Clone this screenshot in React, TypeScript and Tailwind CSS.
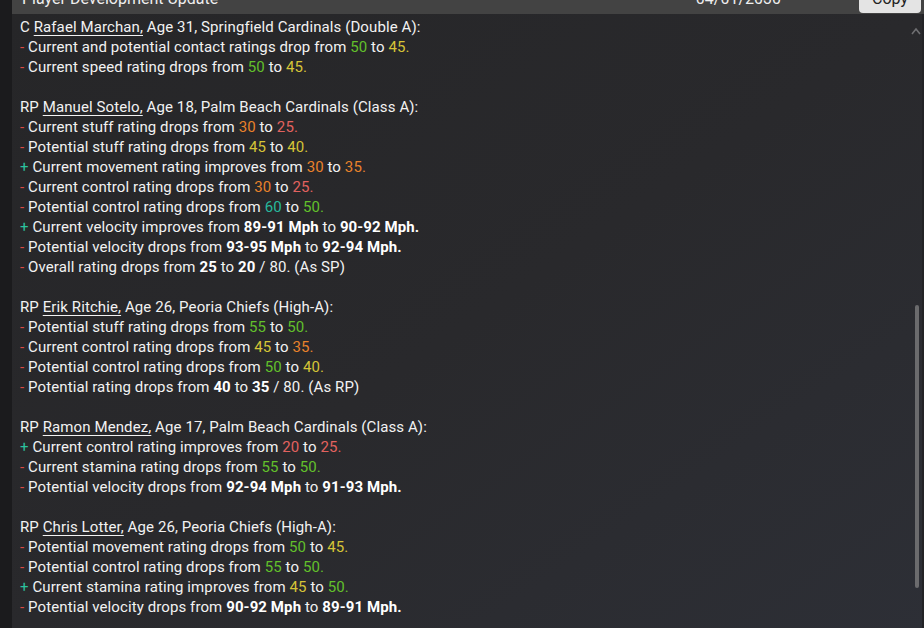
import React from 'react';

type Seg = { t: string; c?: string; b?: boolean };
type Line = { sign: '+' | '-'; segs: Seg[] };
type Entry = { pos: string; name: string; rest: string; lines: Line[] };

const G = 'text-[#62c02b]';
const Y = 'text-[#d6c437]';
const O = 'text-[#e9822b]';
const R = 'text-[#e2625f]';
const T = 'text-[#27b99c]';

const entries: Entry[] = [
  {
    pos: 'C',
    name: 'Rafael Marchan,',
    rest: ' Age 31, Springfield Cardinals (Double A):',
    lines: [
      { sign: '-', segs: [{ t: 'Current and potential contact ratings drop from ' }, { t: '50', c: G }, { t: ' to ' }, { t: '45.', c: Y }] },
      { sign: '-', segs: [{ t: 'Current speed rating drops from ' }, { t: '50', c: G }, { t: ' to ' }, { t: '45.', c: Y }] },
    ],
  },
  {
    pos: 'RP',
    name: 'Manuel Sotelo,',
    rest: ' Age 18, Palm Beach Cardinals (Class A):',
    lines: [
      { sign: '-', segs: [{ t: 'Current stuff rating drops from ' }, { t: '30', c: O }, { t: ' to ' }, { t: '25.', c: R }] },
      { sign: '-', segs: [{ t: 'Potential stuff rating drops from ' }, { t: '45', c: Y }, { t: ' to ' }, { t: '40.', c: Y }] },
      { sign: '+', segs: [{ t: 'Current movement rating improves from ' }, { t: '30', c: O }, { t: ' to ' }, { t: '35.', c: O }] },
      { sign: '-', segs: [{ t: 'Current control rating drops from ' }, { t: '30', c: O }, { t: ' to ' }, { t: '25.', c: R }] },
      { sign: '-', segs: [{ t: 'Potential control rating drops from ' }, { t: '60', c: T }, { t: ' to ' }, { t: '50.', c: G }] },
      { sign: '+', segs: [{ t: 'Current velocity improves from ' }, { t: '89-91 Mph', b: true }, { t: ' to ' }, { t: '90-92 Mph.', b: true }] },
      { sign: '-', segs: [{ t: 'Potential velocity drops from ' }, { t: '93-95 Mph', b: true }, { t: ' to ' }, { t: '92-94 Mph.', b: true }] },
      { sign: '-', segs: [{ t: 'Overall rating drops from ' }, { t: '25', b: true }, { t: ' to ' }, { t: '20', b: true }, { t: ' / 80. (As SP)' }] },
    ],
  },
  {
    pos: 'RP',
    name: 'Erik Ritchie,',
    rest: ' Age 26, Peoria Chiefs (High-A):',
    lines: [
      { sign: '-', segs: [{ t: 'Potential stuff rating drops from ' }, { t: '55', c: G }, { t: ' to ' }, { t: '50.', c: G }] },
      { sign: '-', segs: [{ t: 'Current control rating drops from ' }, { t: '45', c: Y }, { t: ' to ' }, { t: '35.', c: O }] },
      { sign: '-', segs: [{ t: 'Potential control rating drops from ' }, { t: '50', c: G }, { t: ' to ' }, { t: '40.', c: Y }] },
      { sign: '-', segs: [{ t: 'Potential rating drops from ' }, { t: '40', b: true }, { t: ' to ' }, { t: '35', b: true }, { t: ' / 80. (As RP)' }] },
    ],
  },
  {
    pos: 'RP',
    name: 'Ramon Mendez,',
    rest: ' Age 17, Palm Beach Cardinals (Class A):',
    lines: [
      { sign: '+', segs: [{ t: 'Current control rating improves from ' }, { t: '20', c: R }, { t: ' to ' }, { t: '25.', c: R }] },
      { sign: '-', segs: [{ t: 'Current stamina rating drops from ' }, { t: '55', c: G }, { t: ' to ' }, { t: '50.', c: G }] },
      { sign: '-', segs: [{ t: 'Potential velocity drops from ' }, { t: '92-94 Mph', b: true }, { t: ' to ' }, { t: '91-93 Mph.', b: true }] },
    ],
  },
  {
    pos: 'RP',
    name: 'Chris Lotter,',
    rest: ' Age 26, Peoria Chiefs (High-A):',
    lines: [
      { sign: '-', segs: [{ t: 'Potential movement rating drops from ' }, { t: '50', c: G }, { t: ' to ' }, { t: '45.', c: Y }] },
      { sign: '-', segs: [{ t: 'Potential control rating drops from ' }, { t: '55', c: G }, { t: ' to ' }, { t: '50.', c: G }] },
      { sign: '+', segs: [{ t: 'Current stamina rating improves from ' }, { t: '45', c: Y }, { t: ' to ' }, { t: '50.', c: G }] },
      { sign: '-', segs: [{ t: 'Potential velocity drops from ' }, { t: '90-92 Mph', b: true }, { t: ' to ' }, { t: '89-91 Mph.', b: true }] },
    ],
  },
];

export default function App() {
  return (
    <div className="flex h-[628px] w-[924px] overflow-hidden bg-[#1d1d1f] font-['Roboto',sans-serif]">
      <div className="w-[12px] shrink-0 bg-[#1b1b1d]" />
      <div className="flex flex-1 flex-col">
        {/* title bar, mostly scrolled off the top */}
        <div className="h-[14px] shrink-0 overflow-hidden bg-[#434343]">
          <div className="-mt-[16px] flex h-[30px] items-center pl-[10px] pr-[3px] text-[16px] text-[#efefef]">
            <span>Player Development Update</span>
            <span className="ml-auto mr-[78px]">04/01/2030</span>
            <button className="h-[27px] rounded-[4px] bg-[#e4e4e4] px-[13px] text-[16px] text-[#222]">Copy</button>
          </div>
        </div>

        <div className="flex flex-1 bg-gradient-to-br from-[#262628] via-[#29292c] to-[#2d2f36]">
          <div className="flex-1 pl-[8px] pt-[3px] text-[15px] leading-[20px] tracking-[0.1px] text-[#f2f2f2]">
            {entries.map((e, i) => (
              <div key={i} className="mb-[20px]">
                <div>
                  {e.pos} <span className="underline underline-offset-[3px]">{e.name}</span>
                  {e.rest}
                </div>
                {e.lines.map((l, j) => (
                  <div key={j}>
                    {l.sign === '-' ? (
                      <span className="text-[#d94a44]">- </span>
                    ) : (
                      <span className="text-[#2bc39d]">+ </span>
                    )}
                    {l.segs.map((s, k) => (
                      <span key={k} className={(s.c ?? '') + (s.b ? ' font-bold text-white' : '')}>
                        {s.t}
                      </span>
                    ))}
                  </div>
                ))}
              </div>
            ))}
          </div>

          {/* scrollbar */}
          <div className="flex w-[12px] shrink-0 flex-col items-end">
            <svg width="12" height="10" viewBox="0 0 12 10" className="mt-[12px]">
              <path d="M2 8 L6 3 L10 8" stroke="#6f6f72" strokeWidth="1.6" fill="none" />
            </svg>
            <div className="mr-[3px] mt-[269px] h-[283px] w-[4px] rounded-full bg-[#6b6b6d]" />
          </div>
          <div className="w-[2px] shrink-0 bg-[#232326]" />
        </div>
      </div>
    </div>
  );
}
